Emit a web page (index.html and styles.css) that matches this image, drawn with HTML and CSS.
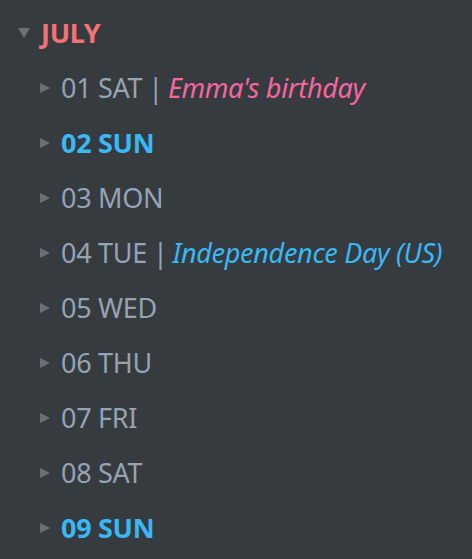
FILE: index.html
```html
<!DOCTYPE html>
<html lang="en">
<head>
    <meta charset="UTF-8">
    <meta name="viewport" content="width=device-width, initial-scale=1.0">
    <title>July</title>
    <link rel="stylesheet" href="styles.css">
</head>
<body>
    <div class="tree">
        <div class="row month">
            <span class="arrow down"></span>
            <span class="label">JULY</span>
        </div>
        <div class="children">
            <div class="row"><span class="arrow"></span><span class="label">01 SAT<span class="sep">|</span><em class="pink">Emma's birthday</em></span></div>
            <div class="row"><span class="arrow"></span><span class="label sunday">02 SUN</span></div>
            <div class="row"><span class="arrow"></span><span class="label">03 MON</span></div>
            <div class="row"><span class="arrow"></span><span class="label">04 TUE<span class="sep">|</span><em class="blue">Independence Day (US)</em></span></div>
            <div class="row"><span class="arrow"></span><span class="label">05 WED</span></div>
            <div class="row"><span class="arrow"></span><span class="label">06 THU</span></div>
            <div class="row"><span class="arrow"></span><span class="label">07 FRI</span></div>
            <div class="row"><span class="arrow"></span><span class="label">08 SAT</span></div>
            <div class="row"><span class="arrow"></span><span class="label sunday">09 SUN</span></div>
        </div>
    </div>
</body>
</html>
```

FILE: styles.css
```css
body {
    margin: 0;
    background-color: #353b3f;
    font-family: "Noto Sans", "Open Sans", sans-serif;
    font-size: 27px;
    letter-spacing: -0.3px;
    overflow: hidden;
}
.tree {
    padding: 5px 0 0 18px;
}
.row {
    display: flex;
    align-items: center;
    height: 55px;
    gap: 11px;
}
.children {
    padding-left: 22px;
}
.label {
    color: #95a3b4;
    white-space: nowrap;
}
.month .label {
    color: #f47174;
    font-weight: bold;
}
.sunday {
    color: #3ab8f5;
    font-weight: bold;
}
.sep {
    margin: 0 5px 0 6px;
}
.arrow {
    width: 0;
    height: 0;
    border-top: 5px solid transparent;
    border-bottom: 5px solid transparent;
    border-left: 10px solid #6a7075;
}
.arrow.down {
    border-left: 6px solid transparent;
    border-right: 6px solid transparent;
    border-top: 10px solid #6a7075;
    border-bottom: 0;
}
em {
    font-style: italic;
}
.pink {
    color: #f7669f;
}
.blue {
    color: #3ab8f5;
}
```
